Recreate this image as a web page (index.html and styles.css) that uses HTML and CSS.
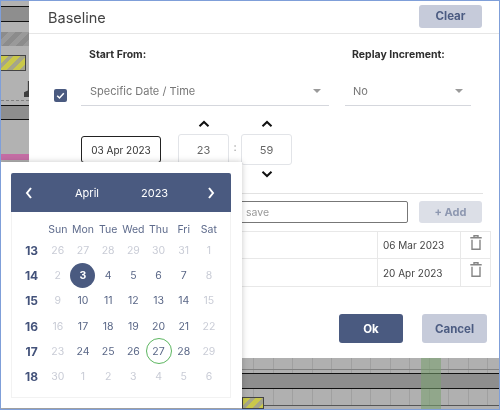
FILE: index.html
```html
<!DOCTYPE html>
<html lang="en">
<head>
<meta charset="utf-8">
<title>Baseline</title>
<link rel="stylesheet" href="styles.css">
</head>
<body>
<div class="frame">
  <div class="gantt">
    <div class="band light h5"></div>
    <div class="band dark h16"></div>
    <div class="band light h10"></div>
    <div class="band hatch h14"></div>
    <div class="band light h54">
      <div class="bar bar-top"></div>
      <div class="marker"></div>
    </div>
    <div class="band light h5 dotted"></div>
    <div class="band dark h15"></div>
    <div class="band light h34"></div>
    <div class="band pink h204"></div>
    <div class="band grid-lines h15 dotted"></div>
    <div class="band dark h16"></div>
    <div class="band grid-lines h19 underline">
      <div class="bar bar-bottom"></div>
    </div>
    <div class="green-col"></div>
  </div>

  <section class="modal">
    <header class="modal-head">
      <h1 class="title">Baseline</h1>
      <button class="btn btn-soft btn-clear">Clear</button>
    </header>
    <div class="labels">
      <span class="label label-start">Start From:</span>
      <span class="label label-replay">Replay Increment:</span>
    </div>
    <div class="selects">
      <span class="check">
        <svg viewBox="0 0 13 13" width="13" height="13"><path d="M3.2 6.8 5.5 9l4.3-4.8" fill="none" stroke="#fff" stroke-width="1.5"/></svg>
      </span>
      <div class="select select-start"><span>Specific Date / Time</span><i class="caret"></i></div>
      <div class="select select-replay"><span>No</span><i class="caret"></i></div>
    </div>
    <div class="when">
      <div class="date-input">03 Apr 2023</div>
      <div class="spinner">
        <svg class="chev" viewBox="0 0 12 8" width="12" height="8"><path d="M1.5 6.3 6 2l4.500 4.300" fill="none" stroke="#111" stroke-width="2"/></svg>
        <div class="time-box">23</div>
        <span class="chev-gap"></span>
      </div>
      <span class="colon">:</span>
      <div class="spinner">
        <svg class="chev" viewBox="0 0 12 8" width="12" height="8"><path d="M1.500 6.300 6 2l4.500 4.300" fill="none" stroke="#111" stroke-width="2"/></svg>
        <div class="time-box">59</div>
        <svg class="chev" viewBox="0 0 12 8" width="12" height="8"><path d="M1.500 1.700 6 6l4.500-4.300" fill="none" stroke="#111" stroke-width="2"/></svg>
      </div>
    </div>
    <div class="divider"></div>
    <div class="add-row">
      <div class="name-input">save</div>
      <button class="btn btn-add">+ Add</button>
    </div>
    <div class="table">
      <div class="row">
        <div class="cell cell-name"></div>
        <div class="cell cell-date">06 Mar 2023</div>
        <div class="cell cell-del">
          <svg viewBox="0 0 12 15" width="12" height="15"><path d="M4 2.200V.7h4v1.500M.3 2.700h11.400M2 4.700v9.600h8V4.700" fill="none" stroke="#858585" stroke-width="1.400"/></svg>
        </div>
      </div>
      <div class="row">
        <div class="cell cell-name"></div>
        <div class="cell cell-date">20 Apr 2023</div>
        <div class="cell cell-del">
          <svg viewBox="0 0 12 15" width="12" height="15"><path d="M4 2.200V.7h4v1.500M.3 2.700h11.400M2 4.700v9.600h8V4.700" fill="none" stroke="#858585" stroke-width="1.400"/></svg>
        </div>
      </div>
    </div>
    <div class="actions">
      <button class="btn btn-primary">Ok</button>
      <button class="btn btn-soft btn-cancel">Cancel</button>
    </div>
  </section>

  <section class="calendar">
    <div class="cal-head">
      <svg viewBox="0 0 8 12" width="8" height="12"><path d="M6 1 2 6l4 5" fill="none" stroke="#fff" stroke-width="2"/></svg>
      <span class="cal-month">April</span>
      <span class="cal-year">2023</span>
      <svg viewBox="0 0 8 12" width="8" height="12"><path d="m2 1 4 5-4 5" fill="none" stroke="#fff" stroke-width="2"/></svg>
    </div>
    <div class="cal-body">
      <span></span><span class="dow">Sun</span><span class="dow">Mon</span><span class="dow">Tue</span><span class="dow">Wed</span><span class="dow">Thu</span><span class="dow">Fri</span><span class="dow">Sat</span>
      <span class="wk">13</span><span class="off">26</span><span class="off">27</span><span class="off">28</span><span class="off">29</span><span class="off">30</span><span class="off">31</span><span class="off">1</span>
      <span class="wk">14</span><span class="off">2</span><span class="day selected">3</span><span class="day">4</span><span class="day">5</span><span class="day">6</span><span class="day">7</span><span class="off">8</span>
      <span class="wk">15</span><span class="off">9</span><span class="day">10</span><span class="day">11</span><span class="day">12</span><span class="day">13</span><span class="day">14</span><span class="off">15</span>
      <span class="wk">16</span><span class="off">16</span><span class="day">17</span><span class="day">18</span><span class="day">19</span><span class="day">20</span><span class="day">21</span><span class="off">22</span>
      <span class="wk">17</span><span class="off">23</span><span class="day">24</span><span class="day">25</span><span class="day">26</span><span class="day today">27</span><span class="day">28</span><span class="off">29</span>
      <span class="wk">18</span><span class="off">30</span><span class="off">1</span><span class="off">2</span><span class="off">3</span><span class="off">4</span><span class="off">5</span><span class="off">6</span>
    </div>
  </section>
</div>
</body>
</html>
```
FILE: styles.css
```css
* { box-sizing: border-box; }
html, body { margin: 0; padding: 0; }
body { width: 500px; height: 410px; overflow: hidden; font-family: Inter, "Liberation Sans", sans-serif; }
.frame { position: relative; width: 500px; height: 410px; border: 1px solid #7f9fd9; overflow: hidden; background: #b0b0b0; filter: blur(.45px); }

/* backdrop chart */
.gantt { display: flex; flex-direction: column; height: 100%; }
.band { position: relative; flex: none; }
.light { background: #b2b2b2; }
.dark { background: #8e8e8e; border-top: 1.500px solid #111; border-bottom: 1.500px solid #111; }
.hatch { background: repeating-linear-gradient(135deg, #8c8c8c 0 5px, #9a9a9a 5px 10px); }
.pink { background: linear-gradient(#c46da4 0 6px, #b0b0b0 6px); }
.h5 { height: 5px; } .h10 { height: 10px; } .h14 { height: 14px; } .h15 { height: 15px; } .h16 { height: 16px; } .h19 { height: 19px; }
.h34 { height: 34px; } .h54 { height: 54px; } .h204 { height: 204px; }
.dotted { border-top: 1px dashed #808080; }
.band.h15.dotted { border-top: 0; border-bottom: 0; background-image: linear-gradient(#808080, #808080), repeating-linear-gradient(90deg, transparent 0 18.500px, #a0a0a0 18.500px 19.500px); background-size: 100% 1px, 100% 100%; background-position: 0 11px, 0 0; background-repeat: no-repeat, repeat; }
.grid-lines { background-color: #b0b0b0; background-image: repeating-linear-gradient(90deg, transparent 0 18.500px, #a0a0a0 18.500px 19.500px); }
.underline { border-bottom: 1px solid #555; height: 17px; }
.bar { position: absolute; border: 1px solid #444; background: repeating-linear-gradient(135deg, #c9c84a 0 5px, #a5a58a 5px 9px); }
.bar-top { left: -1px; top: 9px; width: 26px; height: 16px; }
.bar-bottom { left: 241px; top: 8px; width: 22px; height: 12px; }
.marker { position: absolute; left: 23px; top: 35px; width: 7px; height: 16px; background: #3e3e3e; clip-path: polygon(55% 0, 100% 0, 100% 100%, 0 100%, 0 70%, 55% 60%); }
.green-col { position: absolute; left: 420px; top: 357px; width: 20px; height: 51px; background: rgba(120, 160, 110, .55); }

/* modal */
.modal { position: absolute; left: 28px; top: 0; right: 0; height: 357px; background: #fff; display: flex; flex-direction: column; color: #333; }
.modal-head { display: flex; align-items: center; justify-content: space-between; height: 33px; padding: 0 17px 0 19px; border-bottom: 1px solid #e6e6e6; flex: none; }
.title { margin: 0; font-size: 14.500px; font-weight: 400; color: #444; }
.btn { border: 0; font-family: inherit; font-weight: 700; border-radius: 3px; padding: 0; }
.btn-soft { background: #c6cbda; color: #4c5c82; }
.btn-clear { width: 63px; height: 23px; font-size: 11.500px; margin-top: -2px; }
.labels { display: flex; font-size: 10.500px; font-weight: 700; color: #2e2e2e; height: 40px; align-items: center; flex: none; }
.label-start { margin-left: 60px; width: 263px; }
.selects { display: flex; align-items: flex-end; height: 32px; padding-left: 25px; flex: none; }
.check { width: 13px; height: 13px; margin: 0 14px 4px 0; background: #4a5a80; border-radius: 2px; display: flex; }
.select { position: relative; height: 32px; border-bottom: 1px solid #d5d7dd; font-size: 11px; color: #777; display: flex; align-items: flex-end; padding-bottom: 7px; }
.select-start { width: 248px; padding-left: 9px; margin-right: 16px; }
.select-replay { width: 126px; padding-left: 8px; }
.caret { position: absolute; right: 8px; top: 15px; border: 4px solid transparent; border-top: 4px solid #9a9a9a; border-bottom: 0; }
.when { display: flex; align-items: flex-start; padding: 14px 0 0 52px; height: 87px; flex: none; }
.date-input { width: 80px; height: 27px; margin: 16px 17px 0 0; border: 1.500px solid #222; border-radius: 3px; font-size: 10px; color: #333; display: flex; align-items: center; justify-content: center; }
.spinner { width: 51px; display: flex; flex-direction: column; align-items: center; }
.chev { display: block; flex: none; }
.chev-gap { height: 8px; }
.time-box { width: 51px; height: 31px; margin: 6px 0 5px; border: 1px solid #e2e4e8; border-radius: 3px; font-size: 11px; color: #666; display: flex; align-items: center; justify-content: center; }
.colon { width: 12px; margin-top: 20px; text-align: center; font-size: 11px; color: #999; }
.divider { height: 1px; margin: 0 16px 0 52px; background: #e2e2e2; flex: none; }
.add-row { display: flex; gap: 11px; margin: 7px 0 8px 52px; flex: none; }
.name-input { width: 327px; height: 22px; border: 1px solid #777; border-radius: 2px; padding-left: 164px; font-size: 10.500px; color: #999; display: flex; align-items: center; }
.btn-add { width: 63px; height: 22px; font-size: 11px; background: #dcdfe7; color: #8d97b0; }
.table { margin-left: 52px; width: 410px; border: 1px solid #e8e8e8; flex: none; }
.row { display: flex; height: 26px; }
.row + .row { border-top: 1px solid #e8e8e8; height: 28px; }
.cell { display: flex; align-items: center; }
.cell-name { width: 295px; }
.cell-date { width: 83px; padding-left: 5px; border-left: 1px solid #e8e8e8; font-size: 10px; color: #444; }
.cell-del { flex: 1; border-left: 1px solid #e8e8e8; justify-content: center; padding-bottom: 6px; }
.actions { display: flex; justify-content: flex-end; gap: 19px; padding-right: 12px; margin-top: 27px; flex: none; }
.actions .btn { height: 29px; font-size: 11.500px; }
.btn-primary { width: 64px; background: #4a5a80; color: #fff; }
.btn-cancel { width: 65px; }

/* calendar */
.calendar { position: absolute; left: 0; top: 161px; width: 241px; height: 246px; background: #fff; box-shadow: 0 0 6px rgba(0, 0, 0, .22); padding: 11px 11px 10px 10px; display: flex; flex-direction: column; }
.cal-head { height: 39px; flex: none; background: #4a5a80; border-radius: 2px 2px 0 0; display: flex; align-items: center; padding: 0 15px 0 14px; color: #fff; font-size: 11px; }
.cal-month { margin-left: 42px; width: 66px; }
.cal-year { width: 66px; }
.cal-body { flex: 1; display: grid; grid-template-columns: repeat(8, 25.200px); grid-template-rows: 17px repeat(6, 25.200px); align-content: start; padding: 9px 0 0 8px; border: 1px solid #f2f2f2; border-top: 0; font-size: 10.500px; place-items: center; justify-items: center; }
.cal-body span { display: flex; align-items: center; justify-content: center; width: 25px; height: 25px; border-radius: 50%; }
.dow { color: #5e6b8c; }
.wk { color: #43527a; font-weight: 700; font-size: 12px; padding-right: 2px; }
.off { color: #c9ccd6; }
.day { color: #5a6787; }
.selected { background: #4a5a80; color: #fff; font-weight: 700; }
.today { border: 1px solid #5cb660; width: 26px !important; height: 26px !important; }
```
